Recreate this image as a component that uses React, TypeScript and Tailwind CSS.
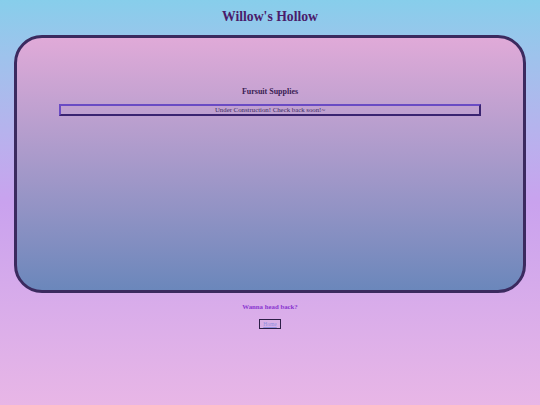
export default function App() {
  return (
    <main
      className="min-h-[405px] w-full bg-gradient-to-b from-[#87ceeb] via-[#c9a2ee] to-[#e8b6e6] flex flex-col items-center"
      style={{ fontFamily: '"Liberation Serif", "Times New Roman", serif' }}
    >
      <h1 className="mt-[8px] h-[18px] text-[13.7px] leading-[18px] font-bold text-[#4a1c6b]">Willow's Hollow</h1>

      <section className="mt-[9px] w-[512px] h-[258px] rounded-[28px] border-[3px] border-[#3b2a5f] bg-gradient-to-b from-[#e0aad8] to-[#6b87bb] flex flex-col items-center">
        <h2 className="mt-[48px] text-[8px] leading-[12px] font-bold text-[#3a2152]">Fursuit Supplies</h2>
        <div className="mt-[6px] w-[422px] h-[12px] border-2 border-t-[#6a4bc4] border-l-[#6a4bc4] border-b-[#3a2470] border-r-[#3a2470] flex items-center justify-center">
          <p className="text-[6.8px] leading-[8px] text-[#3b2a5f]">Under Construction! Check back soon!~</p>
        </div>
      </section>

      <p className="mt-[9px] text-[6.8px] leading-[10px] font-bold text-[#8a36d0]">Wanna head back?</p>
      <a
        href="#"
        className="mt-[7px] w-[22px] h-[10px] border border-[#2d2048] bg-[#d8b0e6] flex items-center justify-center text-[5.5px] leading-[6px] text-[#8f8fe0] underline"
      >
        Home
      </a>
    </main>
  );
}
